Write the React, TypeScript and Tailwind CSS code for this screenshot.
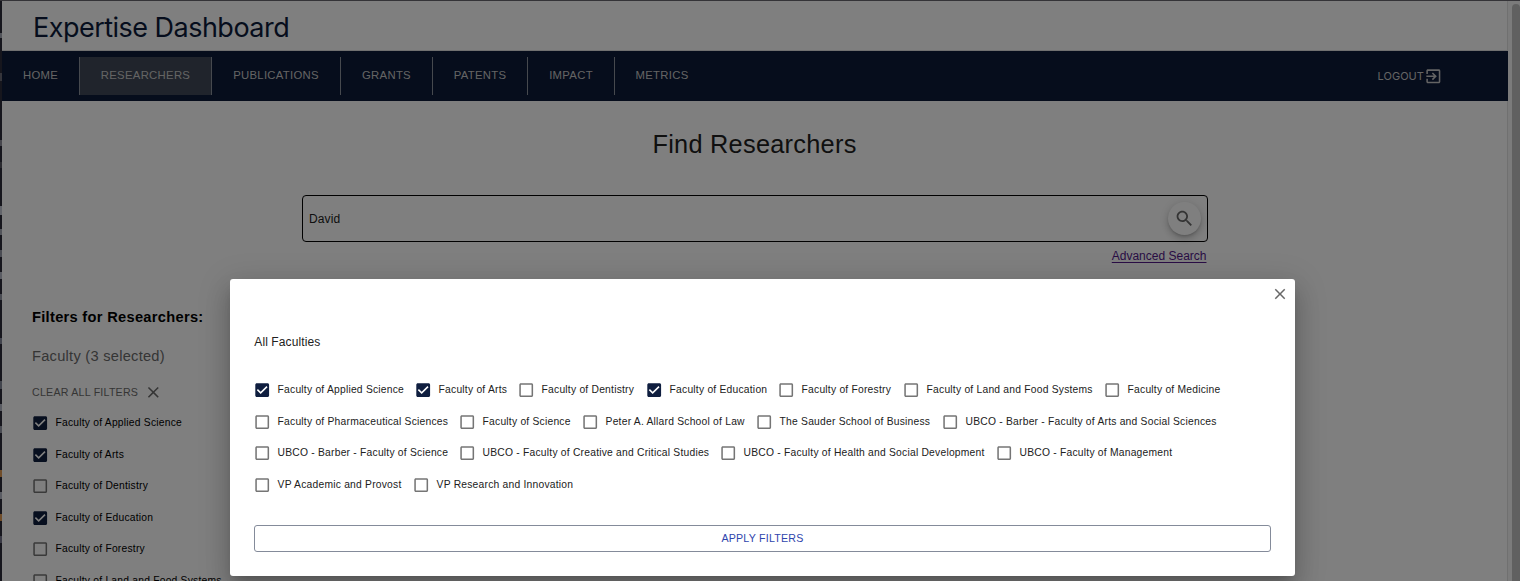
import React from "react";

type Item = { label: string; checked?: boolean; width: string };

const rows: Item[][] = [
  [
    { label: "Faculty of Applied Science", checked: true, width: "w-[161px]" },
    { label: "Faculty of Arts", checked: true, width: "w-[103px]" },
    { label: "Faculty of Dentistry", width: "w-[128px]" },
    { label: "Faculty of Education", checked: true, width: "w-[132px]" },
    { label: "Faculty of Forestry", width: "w-[125px]" },
    { label: "Faculty of Land and Food Systems", width: "w-[201px]" },
    { label: "Faculty of Medicine", width: "w-[140px]" },
  ],
  [
    { label: "Faculty of Pharmaceutical Sciences", width: "w-[205px]" },
    { label: "Faculty of Science", width: "w-[123px]" },
    { label: "Peter A. Allard School of Law", width: "w-[174px]" },
    { label: "The Sauder School of Business", width: "w-[186px]" },
    { label: "UBCO - Barber - Faculty of Arts and Social Sciences", width: "w-[290px]" },
  ],
  [
    { label: "UBCO - Barber - Faculty of Science", width: "w-[205px]" },
    { label: "UBCO - Faculty of Creative and Critical Studies", width: "w-[261px]" },
    { label: "UBCO - Faculty of Health and Social Development", width: "w-[276px]" },
    { label: "UBCO - Faculty of Management", width: "w-[200px]" },
  ],
  [
    { label: "VP Academic and Provost", width: "w-[159px]" },
    { label: "VP Research and Innovation", width: "w-[200px]" },
  ],
];

const sidebar = rows[0].slice(0, 6);

const nav = [
  { label: "HOME", width: "w-[78px]" },
  { label: "RESEARCHERS", width: "w-[132px]", active: true },
  { label: "PUBLICATIONS", width: "w-[129px]" },
  { label: "GRANTS", width: "w-[92px]" },
  { label: "PATENTS", width: "w-[95px]" },
  { label: "IMPACT", width: "w-[87px]" },
  { label: "METRICS", width: "w-[94px]" },
];

const edgeMarks = [
  "mt-[32px] h-[5px] bg-[#a5a9b5]",
  "mt-[35px] h-[8px] bg-[#6b6b76]",
  "mt-[59px] h-[6px] bg-[#8f8f9b]",
  "mt-[16px] h-[6px] bg-[#55555f]",
  "mt-[38px] h-[9px] bg-[#c5c8d4]",
  "mt-[14px] h-[6px] bg-[#a5a9b5]",
  "mt-[15px] h-[7px] bg-[#9599a6]",
  "mt-[15px] h-[7px] bg-[#b5b9c6]",
  "mt-[15px] h-[6px] bg-[#9599a6]",
  "mt-[38px] h-[6px] bg-[#85899a]",
  "mt-[37px] h-[8px] bg-[#858b9a]",
  "mt-[15px] h-[7px] bg-[#b5b9c6]",
  "mt-[15px] h-[7px] bg-[#9599a6]",
  "mt-[37px] h-[7px] bg-[#e09a55]",
  "mt-[15px] h-[7px] bg-[#b5b9c6]",
  "mt-[15px] h-[7px] bg-[#e09a55]",
  "mt-[15px] h-[7px] bg-[#75758a]",
];

function Checkbox({ checked }: { checked?: boolean }) {
  return (
    <svg viewBox="0 0 24 24" className={checked ? "size-[18.4px] shrink-0 text-[#0f1e3f]" : "size-[18.4px] shrink-0 text-[#757575]"} fill="currentColor">
      {checked ? (
        <path d="M19 3H5c-1.11 0-2 .9-2 2v14c0 1.1.89 2 2 2h14c1.11 0 2-.9 2-2V5c0-1.1-.89-2-2-2zm-9 14l-5-5 1.41-1.41L10 14.17l7.59-7.59L19 8l-9 9z" />
      ) : (
        <path d="M19 5v14H5V5h14m0-2H5c-1.1 0-2 .9-2 2v14c0 1.1.9 2 2 2h14c1.1 0 2-.9 2-2V5c0-1.1-.9-2-2-2z" />
      )}
    </svg>
  );
}

function Option({ item }: { item: Item }) {
  return (
    <>
      <span className="relative flex">
        {item.checked && <span className="absolute inset-1 bg-white" />}
        <span className="relative">
          <Checkbox checked={item.checked} />
        </span>
      </span>
      <span className="ml-[6.4px] whitespace-nowrap text-[10.3px] leading-[16px] tracking-[0.22px]">{item.label}</span>
    </>
  );
}

function CloseIcon({ className }: { className: string }) {
  return (
    <svg viewBox="0 0 24 24" fill="currentColor" className={className}>
      <path d="M19 6.41L17.59 5 12 10.59 6.41 5 5 6.41 10.59 12 5 17.59 6.41 19 12 13.41 17.59 19 19 17.59 13.41 12z" />
    </svg>
  );
}

function Page() {
  return (
    <div className="flex h-[581px] flex-col overflow-hidden bg-white">
      <div className="h-px shrink-0 bg-[#68666e]" />
      <div className="flex min-h-0 flex-1">
        <div className="flex w-[2px] shrink-0 flex-col overflow-hidden bg-[#2c2c3a]">
          {edgeMarks.map((mark, i) => (
            <span key={i} className={`w-[2px] shrink-0 ${mark}`} />
          ))}
        </div>
        <div className="flex w-[1506px] shrink-0 flex-col">
          <header className="flex h-[50px] shrink-0 items-center border-r border-b border-[#e0e0e0] pl-[31px]">
            <h1 className="pt-[4px] font-['Inter',sans-serif] text-[27px] leading-[32px] tracking-[-0.52px] text-[#0c1b3a]">Expertise Dashboard</h1>
          </header>
          <nav className="flex h-[50px] shrink-0 items-center bg-[#0c1a38] text-[#c8c8c8]">
            {nav.map((n, i) => (
              <div
                key={n.label}
                className={`flex h-[38px] items-center justify-center border-[#8d929d] text-[11.33px] tracking-[0.29px] ${n.width} ${i < 6 ? "border-r" : ""} ${n.active ? "bg-[#414959]" : ""}`}
              >
                <span className="pb-[2px]">{n.label}</span>
              </div>
            ))}
            <div className="ml-auto flex items-center pr-[65.5px] font-['Inter',sans-serif] text-[11px]">
              <span>LOGOUT</span>
              <svg viewBox="0 0 24 24" fill="currentColor" className="size-[18.67px]">
                <path d="M10.09 15.59L11.5 17l5-5-5-5-1.41 1.41L12.67 11H3v2h9.67l-2.58 2.59zM19 3H5c-1.11 0-2 .9-2 2v4h2V5h14v14H5v-4H3v4c0 1.1.89 2 2 2h14c1.1 0 2-.9 2-2V5c0-1.1-.9-2-2-2z" />
              </svg>
            </div>
          </nav>
          <main className="flex min-h-0 flex-1 flex-col border-r border-[#e0e0e0]">
            <h2 className="mt-[26px] text-center text-[25.33px] leading-[34px] tracking-[0.27px] text-[#212121]">Find Researchers</h2>
            <div className="mx-auto mt-[34px] flex h-[47px] w-[906px] shrink-0 items-center justify-between rounded-[4px] border border-black pr-[6px] pl-[6.5px]">
              <span className="text-[12px] tracking-[0.1px] text-[#212121]">David</span>
              <span className="flex size-[33px] items-center justify-center rounded-full bg-white text-[#686868] shadow-[0_2px_3px_-1px_rgba(0,0,0,0.2),0_4px_7px_0_rgba(0,0,0,0.14),0_1px_12px_0_rgba(0,0,0,0.12)]">
                <svg viewBox="0 0 24 24" fill="currentColor" className="size-[21px]">
                  <path d="M15.5 14h-.79l-.28-.27C15.41 12.59 16 11.11 16 9.5 16 5.91 13.09 3 9.5 3S3 5.91 3 9.5 5.91 16 9.5 16c1.61 0 3.09-.59 4.23-1.57l.27.28v.79l5 4.99L20.49 19l-4.99-5zm-6 0C7.01 14 5 11.99 5 9.5S7.01 5 9.5 5 14 7.01 14 9.5 11.99 14 9.5 14z" />
                </svg>
              </span>
            </div>
            <div className="mx-auto mt-[6px] w-[904px] text-right text-[12px] leading-[16px]">
              <a className="text-[#551a8b] underline underline-offset-2">Advanced Search</a>
            </div>
            <aside className="mt-[44px] flex flex-col pl-[30px]">
              <h3 className="text-[14.67px] leading-[18px] font-bold tracking-[0.29px] text-black">Filters for Researchers:</h3>
              <p className="mt-[21px] text-[14.67px] leading-[18px] tracking-[0.25px] text-[#6b6b6b]">Faculty (3 selected)</p>
              <div className="mt-[18px] flex h-[18px] items-center text-[10.67px] text-[#6b6b6b]">
                <span className="tracking-[0.22px]">CLEAR ALL FILTERS</span>
                <CloseIcon className="ml-[5.5px] size-[18.67px]" />
              </div>
              <div className="mt-[6.5px] -ml-[1.3px] flex flex-col text-black">
                {sidebar.map((item) => (
                  <div key={item.label} className="flex h-[31.5px] shrink-0 items-center">
                    <Option item={item} />
                  </div>
                ))}
              </div>
            </aside>
          </main>
        </div>
        <div className="flex flex-1 justify-end bg-[#f6f6f6]">
          <div className="mt-[3px] w-[8px] rounded-t-[4px] bg-[#c0c0c0]" />
        </div>
      </div>
    </div>
  );
}

function FilterDialog() {
  return (
    <section
      role="dialog"
      aria-label="All Faculties"
      className="mt-[279px] ml-[230px] flex h-[297px] w-[1065px] flex-col rounded-[3px] bg-white shadow-[0_7px_10px_-5px_rgba(0,0,0,0.2),0_16px_25px_2px_rgba(0,0,0,0.14),0_6px_31px_5px_rgba(0,0,0,0.12)]"
    >
      <div className="flex h-[30px] justify-end pt-[6px] pr-[6px] text-[#686868]">
        <CloseIcon className="size-[18px]" />
      </div>
      <h4 className="mt-[24px] pl-[24.3px] text-[12px] leading-[18px] tracking-[0.1px] text-[#212121]">All Faculties</h4>
      <div className="mt-[23.5px] flex flex-col pl-[22.8px] text-[#212121]">
        {rows.map((row, i) => (
          <div key={i} className="flex h-[31.5px] items-center">
            {row.map((item) => (
              <div key={item.label} className={`flex shrink-0 items-center ${item.width}`}>
                <Option item={item} />
              </div>
            ))}
          </div>
        ))}
      </div>
      <button className="mx-[24px] mt-auto mb-[24px] h-[27px] rounded-[3px] border border-[#848b9a] pb-[2px] text-[10.67px] leading-[16px] tracking-[0.22px] text-[#2f45ad]">APPLY FILTERS</button>
    </section>
  );
}

export default function App() {
  return (
    <div className="relative h-[581px] w-[1520px] overflow-hidden font-['Liberation_Sans',Arial,sans-serif]">
      <Page />
      <div className="absolute inset-0 bg-black/50">
        <FilterDialog />
      </div>
    </div>
  );
}
